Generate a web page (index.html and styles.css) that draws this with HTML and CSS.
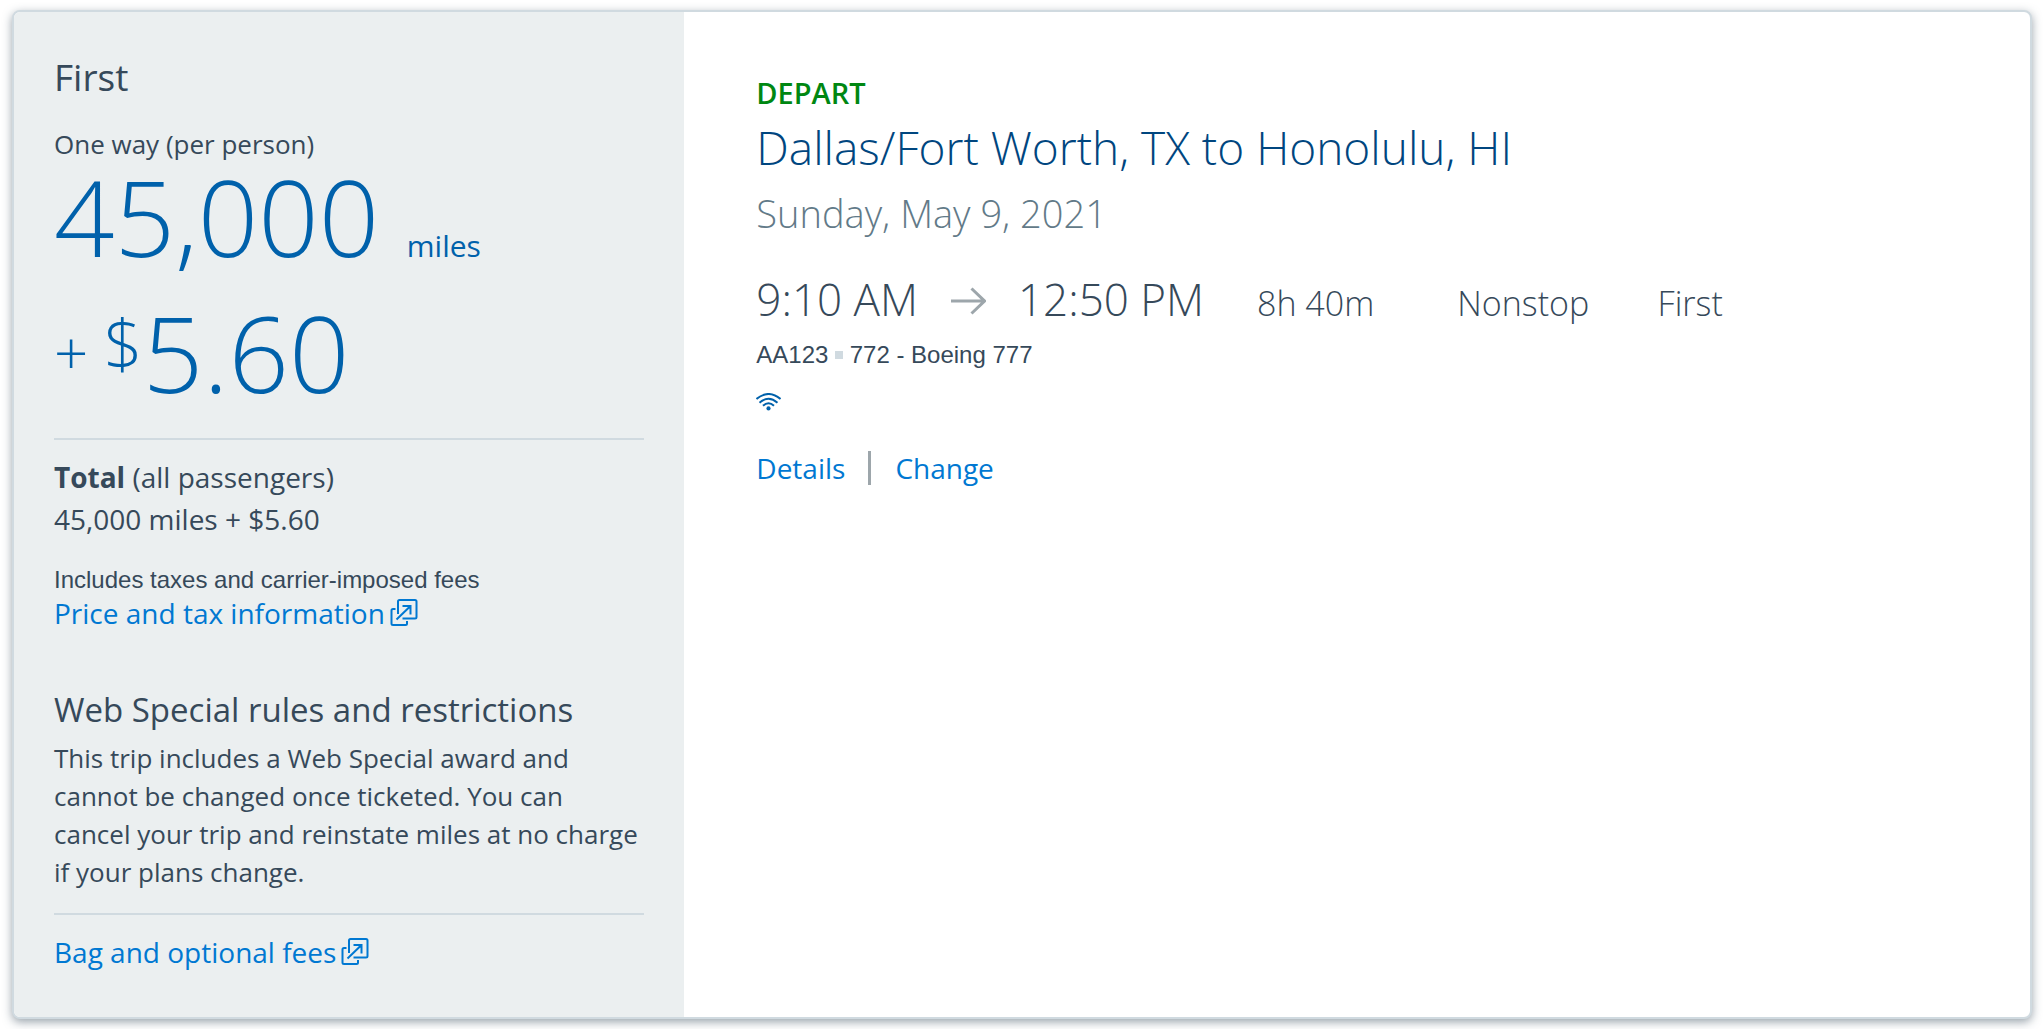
FILE: index.html
```html
<!DOCTYPE html>
<html lang="en">
<head>
<meta charset="utf-8">
<meta name="viewport" content="width=device-width, initial-scale=1">
<title>Trip summary</title>
<link rel="stylesheet" href="styles.css">
</head>
<body>
<svg class="sprite" aria-hidden="true">
  <symbol id="new-window" viewBox="0 0 28 28">
    <path d="M8 15V2.500Q8 1 9.500 1H25Q26.500 1 26.500 2.500V18Q26.500 19.500 25 19.500H12.500M5.500 10H3Q1.500 10 1.500 11.500V24.500Q1.500 26 3 26H15.500Q17 26 17 24.500V22M6.500 20.500L20.500 7M12.500 7H20.500V15.500"/>
  </symbol>
</svg>
<main class="card">
  <aside class="fare">
    <h2 class="cabin">First</h2>
    <p class="basis">One way (per person)</p>
    <p class="amount">45,000 <span class="unit">miles</span></p>
    <p class="amount amount-cash"><span class="plus">+ </span><span class="currency">$</span>5.60</p>
    <hr class="rule">
    <p class="total"><strong>Total</strong> (all passengers)</p>
    <p class="total">45,000 miles + $5.60</p>
    <p class="note">Includes taxes and carrier-imposed fees</p>
    <a class="link" href="#price">Price and tax information<svg class="popup" aria-hidden="true"><use href="#new-window"/></svg></a>
    <h3 class="rules-title">Web Special rules and restrictions</h3>
    <p class="rules">This trip includes a Web Special award and cannot be changed once ticketed. You can cancel your trip and reinstate miles at no charge if your plans change.</p>
    <hr class="rule rule-close">
    <a class="link" href="#bags">Bag and optional fees<svg class="popup" aria-hidden="true"><use href="#new-window"/></svg></a>
  </aside>
  <section class="trip">
    <p class="direction">DEPART</p>
    <h1 class="route">Dallas/Fort Worth, TX to Honolulu, HI</h1>
    <p class="date">Sunday, May 9, 2021</p>
    <div class="flight">
      <div class="times">
        <span>9:10 AM</span>
        <svg class="arrow" viewBox="0 0 36 28" role="img" aria-label="to"><path d="M1 14H34M21.500 1.500L34.500 14L21.500 26.500"/></svg>
        <span>12:50 PM</span>
      </div>
      <span class="fact">8h 40m</span>
      <span class="fact">Nonstop</span>
      <span class="fact">First</span>
    </div>
    <p class="aircraft">AA123 <span class="bullet"></span> 772 - Boeing 777</p>
    <svg class="wifi" viewBox="0 0 25 18" role="img" aria-label="Wi-Fi"><path d="M.500 6Q12.500-4 24.500 6M3.500 9.800Q12.500 1.800 21.500 9.800M7 12.800Q12.500 7.800 18 12.800"/><circle cx="12.500" cy="15.400" r="2.100"/></svg>
    <nav class="actions">
      <a class="link" href="#details">Details</a>
      <a class="link" href="#change">Change</a>
    </nav>
  </section>
</main>
</body>
</html>
```
FILE: styles.css
```css
* {
  box-sizing: border-box;
}

body {
  margin: 0;
  padding: 10px 12px;
  background: #fff;
  color: #36495a;
  font-family: "Open Sans", "Noto Sans", sans-serif;
  font-weight: 400;
}

h1, h2, h3, p {
  margin: 0;
  font-weight: 400;
}

.sprite {
  display: none;
}

.card {
  display: grid;
  grid-template-columns: 33.25% 1fr;
  border: 2px solid #d0dae0;
  border-radius: 8px;
  background: #fff;
  box-shadow: 0 3px 10px rgba(54, 73, 90, 0.5);
}

/* Fare column */
.fare {
  padding: 40px 40px 48px;
  border-radius: 6px 0 0 6px;
  background: #ebeff0;
}

.cabin {
  font-size: 37px;
  line-height: 50px;
}

.basis {
  margin-top: 22px;
  font-size: 26px;
  line-height: 40px;
}

.amount {
  color: #0061ab;
  font-size: 106px;
  font-weight: 300;
  line-height: 104px;
  white-space: nowrap;
}

.amount-cash {
  margin-top: 32px;
}

.unit {
  font-size: 30px;
  font-weight: 400;
  line-height: 40px;
}

.plus,
.currency {
  line-height: 64px;
}

.plus {
  font-size: 60px;
  vertical-align: 18px;
}

.currency {
  font-size: 68px;
  vertical-align: 24px;
}

.rule {
  height: 2px;
  margin: 34px 0 16px;
  border: 0;
  background: #d0dae0;
}

.rule-close {
  margin: 22px 0 20px;
}

.total {
  font-size: 28px;
  line-height: 42px;
}

.total strong {
  font-weight: 700;
}

.note,
.aircraft {
  font-family: "Liberation Sans", Arial, sans-serif;
  font-size: 24px;
  line-height: 32px;
}

.note {
  margin-top: 24px;
}

.link {
  display: flex;
  align-items: center;
  width: fit-content;
  color: #0078d2;
  font-size: 28px;
  line-height: 34px;
  text-decoration: none;
}

.link:hover {
  text-decoration: underline;
}

.popup {
  width: 28px;
  height: 28px;
  margin-left: 5px;
  fill: none;
  stroke: #0078d2;
  stroke-width: 2;
}

.rules-title {
  margin-top: 56px;
  font-size: 33px;
  line-height: 48px;
}

.rules {
  margin-top: 5px;
  font-size: 26px;
  line-height: 38px;
}

/* Trip column */
.trip {
  padding: 61px 72px 60px;
}

.direction {
  color: #008712;
  font-size: 29px;
  font-weight: 600;
  line-height: 40px;
}

.route {
  margin-top: 4px;
  color: #00467f;
  font-size: 46px;
  font-weight: 300;
  line-height: 60px;
}

.date {
  margin-top: 8px;
  color: #627a88;
  font-size: 38px;
  font-weight: 300;
  line-height: 56px;
}

.flight {
  display: grid;
  grid-template-columns: 5fr 2fr 2fr 3fr;
  align-items: baseline;
  margin-top: 28px;
  font-weight: 300;
  line-height: 60px;
  white-space: nowrap;
}

.times {
  display: flex;
  align-items: center;
  gap: 32px;
  font-size: 44px;
}

.arrow {
  width: 36px;
  height: 28px;
  margin-top: 4px;
  fill: none;
  stroke: #9da6ab;
  stroke-width: 3;
}

.fact {
  font-size: 34px;
}

.aircraft {
  margin-top: 6px;
}

.bullet {
  display: inline-block;
  width: 8px;
  height: 8px;
  background: #d0dae0;
  vertical-align: 4px;
}

.wifi {
  display: block;
  width: 25px;
  height: 18px;
  margin-top: 22px;
  fill: none;
  stroke: #0061ab;
  stroke-width: 2;
}

.wifi circle {
  fill: #0061ab;
  stroke: none;
}

.actions {
  display: flex;
  margin-top: 40px;
}

.actions .link + .link {
  margin-left: 23px;
  padding-left: 24px;
  border-left: 3px solid #9da6ab;
}
```
